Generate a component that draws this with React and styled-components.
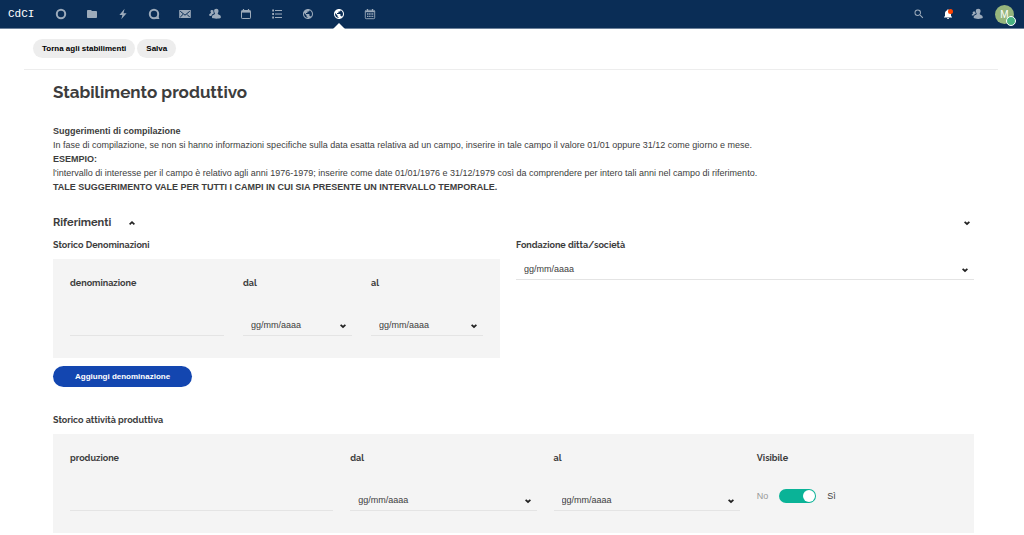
import React, { useState } from 'react';
import styled, { createGlobalStyle } from 'styled-components';
import { MdFolder, MdPublic, MdSearch, MdNotifications } from 'react-icons/md';

const NAV_ITEMS = [
  { label: 'Dashboard', icon: RingIcon },
  { label: 'File', icon: MdFolder },
  { label: 'Attività', icon: BoltIcon },
  { label: 'Talk', icon: TalkIcon },
  { label: 'Posta', icon: MailIcon },
  { label: 'Contatti', icon: GroupIcon },
  { label: 'Calendario', icon: CalendarIcon },
  { label: 'Attività da svolgere', icon: ListIcon },
  { label: 'Sito', icon: MdPublic },
  { label: 'Stabilimenti', icon: MdPublic, active: true },
  { label: 'Appuntamenti', icon: CalendarDaysIcon },
];

export default function App() {
  const [visible, setVisible] = useState(true);

  return (
    <>
      <GlobalStyle />
      <Header>
        <Logo href="#">CdCI</Logo>
        <Nav>
          {NAV_ITEMS.map(({ label, icon: Icon, active }) => (
            <NavLink key={label} href="#" aria-label={label} $active={active}>
              <Icon />
            </NavLink>
          ))}
        </Nav>
        <HeaderRight>
          <HeaderButton aria-label="Cerca">
            <MdSearch />
          </HeaderButton>
          <HeaderButton aria-label="Notifiche" $bright>
            <MdNotifications />
            <NotificationDot />
          </HeaderButton>
          <HeaderButton aria-label="Contatti">
            <PersonIcon />
          </HeaderButton>
          <Avatar aria-label="Profilo">
            M
            <StatusDot />
          </Avatar>
        </HeaderRight>
      </Header>

      <Page>
        <Toolbar>
          <ToolbarButton>Torna agli stabilimenti</ToolbarButton>
          <ToolbarButton>Salva</ToolbarButton>
        </Toolbar>

        <Content>
          <Title>Stabilimento produttivo</Title>

          <Hints>
            <strong>Suggerimenti di compilazione</strong>
            <p>
              In fase di compilazione, se non si hanno informazioni specifiche
              sulla data esatta relativa ad un campo, inserire in tale campo il
              valore 01/01 oppure 31/12 come giorno e mese.
            </p>
            <strong>ESEMPIO:</strong>
            <p>
              l'intervallo di interesse per il campo è relativo agli anni
              1976-1979; inserire come date 01/01/1976 e 31/12/1979 così da
              comprendere per intero tali anni nel campo di riferimento.
            </p>
            <strong>
              TALE SUGGERIMENTO VALE PER TUTTI I CAMPI IN CUI SIA PRESENTE UN
              INTERVALLO TEMPORALE.
            </strong>
          </Hints>

          <SectionHeader>
            <SectionTitle>Riferimenti</SectionTitle>
            <ToggleButton aria-label="Comprimi">
              <Chevron up />
            </ToggleButton>
            <ToggleButton aria-label="Espandi" $end>
              <Chevron />
            </ToggleButton>
          </SectionHeader>

          <Columns>
            <div>
              <GroupLabel as="h3">Storico Denominazioni</GroupLabel>
              <Panel $columns="154fr 109fr 112fr" $gap="19px">
                <Field>
                  <Label htmlFor="denominazione">denominazione</Label>
                  <TextInput id="denominazione" type="text" />
                </Field>
                <Field>
                  <Label htmlFor="den-dal">dal</Label>
                  <DateSelect id="den-dal" />
                </Field>
                <Field>
                  <Label htmlFor="den-al">al</Label>
                  <DateSelect id="den-al" />
                </Field>
              </Panel>
              <PrimaryButton>Aggiungi denominazione</PrimaryButton>
            </div>
            <div>
              <GroupLabel as="label" htmlFor="fondazione">
                Fondazione ditta/società
              </GroupLabel>
              <DateSelect id="fondazione" />
            </div>
          </Columns>

          <GroupLabel as="h3">Storico attività produttiva</GroupLabel>
          <Panel $columns="263fr 186fr 186fr 200fr" $gap="17px">
            <Field>
              <Label htmlFor="produzione">produzione</Label>
              <TextInput id="produzione" type="text" />
            </Field>
            <Field>
              <Label htmlFor="prod-dal">dal</Label>
              <DateSelect id="prod-dal" />
            </Field>
            <Field>
              <Label htmlFor="prod-al">al</Label>
              <DateSelect id="prod-al" />
            </Field>
            <Field>
              <Label htmlFor="visibile">Visibile</Label>
              <SwitchRow>
                <SwitchText $muted={visible}>No</SwitchText>
                <Switch
                  id="visibile"
                  type="checkbox"
                  checked={visible}
                  onChange={(e) => setVisible(e.target.checked)}
                />
                <SwitchText $muted={!visible}>Sì</SwitchText>
              </SwitchRow>
            </Field>
          </Panel>
        </Content>
      </Page>
    </>
  );
}

function DateSelect({ id }) {
  return (
    <SelectWrapper>
      <Select id={id} defaultValue="">
        <option value="">gg/mm/aaaa</option>
      </Select>
      <Chevron />
    </SelectWrapper>
  );
}

function Chevron({ up }) {
  return (
    <svg width="6" height="6" viewBox="0 0 6 6" fill="none" aria-hidden="true">
      <path
        d={up ? 'M.6 4.4 3 2.2l2.4 2.2' : 'M.6 1.8 3 4l2.4-2.2'}
        stroke="#222"
        strokeWidth="1.7"
      />
    </svg>
  );
}

function RingIcon() {
  return (
    <svg viewBox="0 0 12 12" fill="none" stroke="currentColor">
      <circle cx="6" cy="6" r="4.2" strokeWidth="2" />
    </svg>
  );
}

function BoltIcon() {
  return (
    <svg viewBox="0 0 12 12" fill="currentColor">
      <path d="M7.6.8 2.4 6.9h3L4.3 11.2 9.6 5.3H6.5z" />
    </svg>
  );
}

function TalkIcon() {
  return (
    <svg viewBox="0 0 12 12">
      <circle
        cx="6"
        cy="6"
        r="4.2"
        fill="none"
        stroke="currentColor"
        strokeWidth="2"
      />
      <path
        d="M10.6 7.2c0 1.6.3 2.8.9 3.9-1.600.1-3.100-.1-4.300-.7z"
        fill="currentColor"
      />
    </svg>
  );
}

function MailIcon() {
  return (
    <svg viewBox="0 0 12 12">
      <rect x=".2" y="2" width="11.6" height="8" rx=".5" fill="currentColor" />
      <path
        d="M1.200 3.200 6 7.200l4.800-4M1.200 9.200l2.800-2.800M10.800 9.200 8 6.400"
        fill="none"
        stroke="#0a2d56"
        strokeWidth="1"
      />
    </svg>
  );
}

function GroupIcon() {
  return (
    <svg viewBox="0 0 12 12" fill="currentColor">
      <path d="M7.300.8c1.400 0 2.200.9 2.200 2.200 0 1-.3 1.700-.7 2.200v.9c.7.6 2.900 1.100 3 2.500v1.200c-.7.600-2.300.9-4.400.9s-3.700-.3-4.400-.9V8.600c.1-1.400 2.200-1.900 2.900-2.500v-.9c-.4-.5-.8-1.200-.8-2.200C5.100 1.700 5.900.8 7.300.8z" />
      <path d="M3.200 1.900c.6 0 1 .2 1.300.5-.2 1.200.1 2.100.6 2.900-.9.700-2.500 1.200-2.700 2.700C1.300 7.900.6 7.700.2 7.400v-.9c.1-.8 1.300-1.200 1.700-1.600v-.6c-.3-.3-.4-.8-.4-1.100 0-.8.600-1.300 1.700-1.300z" />
    </svg>
  );
}

function PersonIcon() {
  return (
    <svg viewBox="0 0 12 12" fill="currentColor">
      <path d="M7.200.7c1.500 0 2.400.9 2.400 2.300 0 1-.3 1.700-.8 2.300v1c.7.6 2.700 1 2.900 2.400v1.400c-.7.500-2.300.8-4.500.8s-3.800-.3-4.500-.8V8.700c.2-1.400 2.200-1.800 2.900-2.400v-1c-.5-.6-.8-1.300-.8-2.300 0-1.400.9-2.300 2.400-2.300z" />
      <path d="M3.300 3.400c.3 0 .6.100.8.200.1.700.4 1.300.8 1.800-.8.600-2.300 1.100-2.600 2.300C1.600 7.600 1 7.500.7 7.300c0-1 .9-1.300 1.400-1.700-.3-.4-.5-.7-.5-1.100 0-.7.6-1.100 1.700-1.100z" />
    </svg>
  );
}

function CalendarIcon() {
  return (
    <svg viewBox="0 0 12 12" fill="none" stroke="currentColor">
      <rect x="1.500" y="2.500" width="9" height="8" rx=".7" strokeWidth="1" />
      <path d="M1.500 3.700h9" strokeWidth="1.800" />
      <path d="M3.500.9v2M8.500.9v2" strokeWidth="1.200" />
    </svg>
  );
}

function ListIcon() {
  return (
    <svg viewBox="0 0 12 12" fill="none" stroke="currentColor">
      <path d="M1.200 2.500h1.800M1.200 6h1.800M1.200 9.500h1.800" strokeWidth="1.800" />
      <path d="M4 2.500h7M4 6h7M4 9.500h7" strokeWidth="1.200" />
    </svg>
  );
}

function CalendarDaysIcon() {
  return (
    <svg viewBox="0 0 12 12" fill="none" stroke="currentColor">
      <rect x="1.300" y="2.300" width="9.400" height="8.400" rx=".9" strokeWidth=".9" />
      <path d="M1.300 3.600h9.400" strokeWidth="1.200" />
      <path d="M3.500 1v2M8.500 1v2" strokeWidth="1.200" />
      <path d="M3 6h6.500M3 8.300h6.500" strokeWidth="1.300" strokeDasharray="1.200 .5" />
    </svg>
  );
}

const GlobalStyle = createGlobalStyle`
  * {
    box-sizing: border-box;
  }

  body {
    margin: 0;
    background: #fff;
    color: #3d3d3d;
    font-family: 'Liberation Sans', Arial, sans-serif;
    font-size: 9px;
  }

  button, input, select {
    font: inherit;
    color: inherit;
  }

  h1, h2, h3, p {
    margin: 0;
  }
`;

const Header = styled.header`
  display: flex;
  align-items: stretch;
  height: 29px;
  padding: 0 8px;
  background: #0a2d56;
  border-bottom: 1px solid #6c819a;
`;

const Logo = styled.a`
  width: 38px;
  color: #fff;
  font-family: 'Liberation Mono', monospace;
  font-size: 11px;
  line-height: 28px;
  text-decoration: none;
`;

const Nav = styled.nav`
  display: flex;
  width: 339px;
`;

const NavLink = styled.a`
  position: relative;
  display: flex;
  flex: 1;
  align-items: center;
  justify-content: center;
  color: ${({ $active }) => ($active ? '#fff' : '#9dabbb')};

  svg {
    width: 12px;
    height: 12px;
  }

  &::after {
    content: ${({ $active }) => ($active ? "''" : 'none')};
    position: absolute;
    bottom: -1px;
    border: 6px solid transparent;
    border-top: 0;
    border-bottom-color: #fff;
  }
`;

const HeaderRight = styled.div`
  display: flex;
  align-items: center;
  margin-left: auto;
`;

const HeaderButton = styled.button`
  position: relative;
  display: flex;
  align-items: center;
  justify-content: center;
  width: 29px;
  height: 28px;
  padding: 0;
  border: 0;
  background: none;
  color: ${({ $bright }) => ($bright ? '#fff' : '#9dabbb')};

  svg {
    width: 12px;
    height: 12px;
  }
`;

const NotificationDot = styled.span`
  position: absolute;
  top: 9px;
  right: 9px;
  width: 5px;
  height: 5px;
  border-radius: 50%;
  background: #ff4402;
`;

const Avatar = styled.button`
  position: relative;
  width: 19px;
  height: 19px;
  margin-left: 4px;
  margin-right: 2px;
  padding: 0;
  border: 0;
  border-radius: 50%;
  background: #95b57d;
  color: #fff;
  font-size: 10px;
  line-height: 19px;
`;

const StatusDot = styled.span`
  position: absolute;
  right: -2px;
  bottom: -2px;
  width: 10px;
  height: 10px;
  border: 1px solid #fff;
  border-radius: 50%;
  background: #49b382;
`;

const Page = styled.main`
  padding: 0 26px 0 24px;
`;

const Toolbar = styled.div`
  display: flex;
  gap: 2px;
  padding: 10px 9px 11px;
  border-bottom: 1px solid #ededed;
`;

const ToolbarButton = styled.button`
  height: 19px;
  padding: 0 9px;
  border: 0;
  border-radius: 10px;
  background: #ededed;
  color: #000;
  font-size: 8px;
  font-weight: 700;
`;

const Content = styled.div`
  padding: 10px 24px 0 29px;
`;

const Title = styled.h1`
  font-family: Raleway, Lato, sans-serif;
  font-size: 17px;
  font-weight: 700;
  line-height: 24px;
`;

const Hints = styled.div`
  margin-top: 20px;
  line-height: 14px;

  strong {
    display: block;
  }
`;

const SectionHeader = styled.div`
  display: flex;
  align-items: center;
  margin-top: 21px;
`;

const SectionTitle = styled.h2`
  font-family: Raleway, Lato, sans-serif;
  font-size: 11px;
  font-weight: 700;
  line-height: 16px;
`;

const ToggleButton = styled.button`
  display: flex;
  margin-left: ${({ $end }) => ($end ? 'auto' : '18px')};
  margin-right: ${({ $end }) => ($end ? '4px' : '0')};
  padding: 0;
  border: 0;
  background: none;
`;

const Columns = styled.div`
  display: grid;
  grid-template-columns: 447fr 458fr;
  gap: 16px;
  margin: 7px 0 26px;
`;

const GroupLabel = styled.div`
  display: block;
  margin-bottom: 7px;
  font-family: Raleway, Lato, sans-serif;
  font-size: 9px;
  font-weight: 700;
  line-height: 14px;
`;

const Panel = styled.section`
  display: grid;
  grid-template-columns: ${({ $columns }) => $columns};
  gap: ${({ $gap }) => $gap};
  padding: 17px 17px 22px;
  background: #f4f4f4;
`;

const Field = styled.div`
  display: flex;
  flex-direction: column;
  justify-content: space-between;
  min-width: 0;
  height: 60px;
`;

const Label = styled.label`
  font-family: Raleway, Lato, sans-serif;
  font-size: 9px;
  font-weight: 700;
  line-height: 14px;
`;

const TextInput = styled.input`
  width: 100%;
  height: 21px;
  padding: 0 8px;
  border: 0;
  border-bottom: 1px solid #e4e4e4;
  border-radius: 0;
  background: transparent;
`;

const SelectWrapper = styled.div`
  position: relative;

  svg {
    position: absolute;
    top: 8px;
    right: 6px;
    pointer-events: none;
  }
`;

const Select = styled.select`
  display: block;
  width: 100%;
  height: 21px;
  padding: 0 8px;
  border: 0;
  border-bottom: 1px solid #e4e4e4;
  border-radius: 0;
  background: transparent;
  appearance: none;
`;

const PrimaryButton = styled.button`
  height: 21px;
  margin-top: 8px;
  padding: 0 22px;
  border: 0;
  border-radius: 11px;
  background: #1346b0;
  color: #fff;
  font-size: 8px;
  font-weight: 700;
`;

const SwitchRow = styled.div`
  display: flex;
  align-items: center;
  gap: 11px;
  height: 30px;
`;

const SwitchText = styled.span`
  color: ${({ $muted }) => ($muted ? '#999' : '#3d3d3d')};
`;

const Switch = styled.input`
  position: relative;
  width: 37px;
  height: 14px;
  margin: 0;
  border-radius: 7px;
  background: ${({ checked }) => (checked ? '#0ab397' : '#bbb')};
  appearance: none;

  &::after {
    content: '';
    position: absolute;
    top: 1px;
    right: ${({ checked }) => (checked ? '1px' : '24px')};
    width: 12px;
    height: 12px;
    border-radius: 50%;
    background: #fff;
  }
`;
